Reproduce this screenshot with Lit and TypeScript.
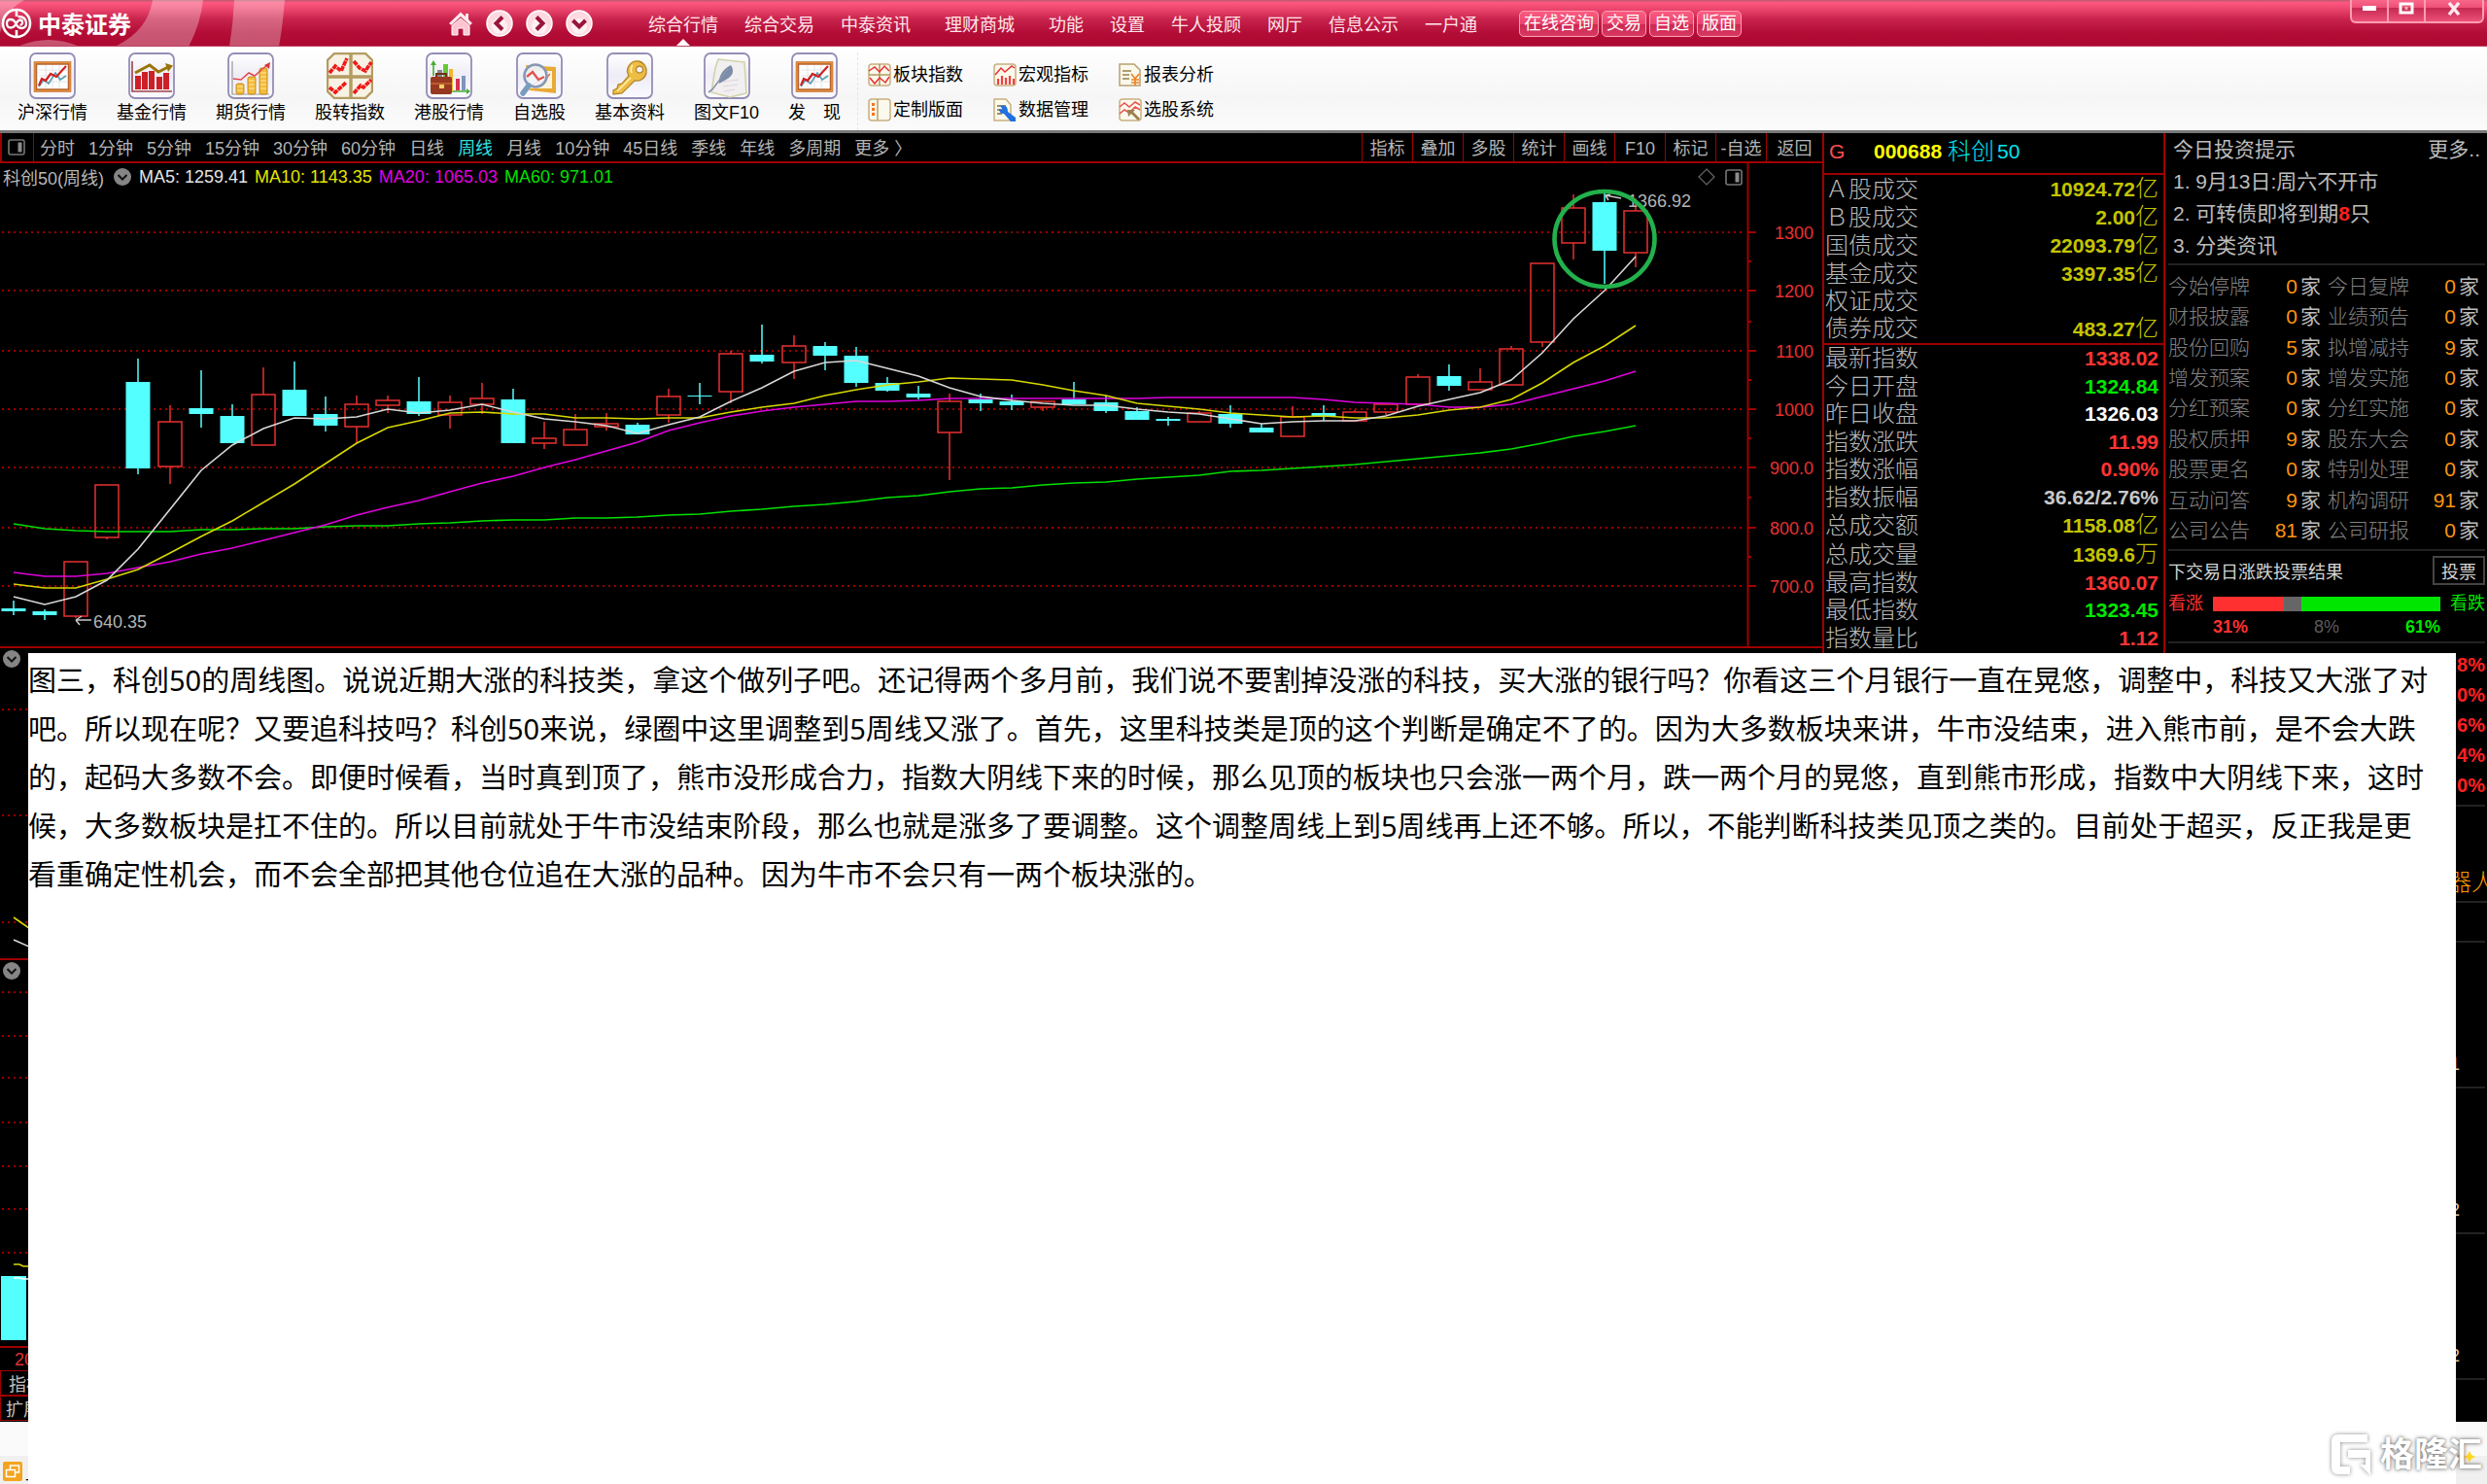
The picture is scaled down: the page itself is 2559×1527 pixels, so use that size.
import { LitElement, html, svg, css } from "lit";
import { customElement } from "lit/decorators.js";
import { classMap } from "lit/directives/class-map.js";

const reset = css`
  * { box-sizing: border-box; }
  button, a { font: inherit; color: inherit; background: none; border: 0; padding: 0; margin: 0; text-decoration: none; cursor: pointer; white-space: nowrap; }
  ul, ol, h1, h2, p { margin: 0; padding: 0; list-style: none; font: inherit; }
  svg { display: block; flex: none; }
`;

/* ---------- shared glyphs ---------- */

const chevronDot = html`<svg width="20" height="20" viewBox="0 0 20 20">
  <circle cx="10" cy="10" r="9" fill="#858585" /><path d="M5.5 8 L10 12.5 L14.5 8" fill="none" stroke="#111" stroke-width="2" /></svg>`;

const panelGlyph = html`<svg width="18" height="17" viewBox="0 0 18 17">
  <rect x="1" y="1" width="16" height="15" rx="2" fill="none" stroke="#777" stroke-width="1.6" /><rect x="10.5" y="3.5" width="4" height="10" fill="#8c8c8c" /></svg>`;

/* ---------- title bar ---------- */

@customElement("title-bar")
class TitleBar extends LitElement {
  static styles = [reset, css`
    :host { display: block; }
    .bar { position: relative; display: flex; align-items: center; height: 48px; overflow: hidden; color: #ffe6ec; font-size: 18px;
      border-bottom: 1px solid #c04565;
      background: linear-gradient(#c25a72 0, #c25a72 1px, #ff5880 2px, #f04a72 8px, #c7224b 20px, #b30d37 34px, #ad0830 47px); }
    .waves { position: absolute; left: 0; top: 0; }
    .brand { position: relative; display: flex; align-items: center; gap: 6px; width: 461px; padding-left: 1px; color: #fff; font-size: 24px; font-weight: 700; }
    .tools { display: flex; align-items: center; gap: 13px; width: 206px; }
    nav { display: flex; align-items: center; gap: 27px; height: 100%; }
    nav a { position: relative; display: flex; align-items: center; height: 100%; }
    nav a.wide { margin: 0 8px; }
    nav a.on::after { content: ""; position: absolute; left: 50%; bottom: 0; margin-left: -7px; border: 7px solid transparent; border-top-width: 0; border-bottom-color: #fff; }
    .quick { display: flex; gap: 3px; margin: 2px 0 0 43px; }
    .quick button { height: 27px; padding: 0 4px; border: 1px solid #ffa0b4; border-radius: 5px; line-height: 25px; color: #fff;
      background: linear-gradient(#fb5c80, #e84570 50%, #cb2850 52%, #d83862); }
    .win { display: flex; align-self: flex-start; height: 24px; margin-left: auto; margin-right: 3px; border: 2px solid #ff9cb2; border-top: 0; border-radius: 0 0 6px 6px;
      background: linear-gradient(#f8688a, #ee4f76 35%, #c62a52 38%, #ec5078); }
    .win button { display: flex; align-items: center; justify-content: center; width: 38px; border-right: 2px solid #ff9cb2; padding-bottom: 5px; }
    .win button:last-child { width: 58px; border: 0; }
  `];
  render() {
    const nav = ["综合行情", "综合交易", "中泰资讯", "理财商城", "功能", "设置", "牛人投顾", "网厅", "信息公示", "一户通"];
    const round = (label: string, d: string) => html`<button aria-label=${label}><svg width="28" height="28" viewBox="0 0 28 28">
      <circle cx="14" cy="14" r="13" fill="#ffd9e2" stroke="#fff" stroke-width="1.5" /><circle cx="14" cy="17" r="8" fill="#fff" opacity=".6" />
      <path d=${d} fill="none" stroke="#98143c" stroke-width="4" /></svg></button>`;
    return html`<header class="bar">
      <svg class="waves" width="300" height="48" viewBox="0 0 300 48">
        <g fill="#fff" opacity=".3">
          <path d="M157 0 H209 Q206 26 194 48 H118 Q152 32 157 0Z" /><path d="M241 0 H293 Q291 26 287 48 H236 Q240 24 241 0Z" />
          <path d="M18 48 Q50 34 82 48Z" /><path d="M0 0 H25 Q6 10 0 34Z" />
        </g></svg>
      <h1 class="brand"><svg width="32" height="32" viewBox="0 0 32 32" fill="none" stroke="#fff">
          <circle cx="16" cy="16" r="14" stroke-width="2.6" />
          <path d="M16 3 V9 M16 23 V29" stroke-width="2.6" />
          <path d="M17.500 9 Q26 9 26 16 Q26 21 21 21 Q17.500 21 15.500 16.500 Q13.500 12 10 12 Q6 12 6 16 Q6 20.500 10 20.500 Q13.500 20.500 15.500 16.500 Q17.500 12.500 20 12.500 Q22.500 13 22 16 Q21.500 18 19.500 17.500" stroke-width="2.300" /></svg>中泰证券</h1>
      <div class="tools">
        <button aria-label="主页"><svg width="26" height="26" viewBox="0 0 26 26"><path d="M1 13 L13 1.500 L18 6 V3 H21 V9 L25 13 L22.500 15 L13 6 L3.500 15Z" fill="#ffe9ee" /><path d="M4 15.500 L13 8 L22 15.500 V25 H16 V18 H10 V25 H4Z" fill="#ffc4d0" stroke="#fff" /></svg></button>
        ${round("后退", "M17 7.500 L10.500 14 L17 20.500")}${round("前进", "M11 7.500 L17.500 14 L11 20.500")}${round("展开", "M7.500 11 L14 17.500 L20.500 11")}
      </div>
      <nav>${nav.map((t, i) => html`<a href="#" class=${classMap({ on: i === 0, wide: i === 3 })}>${t}</a>`)}</nav>
      <div class="quick">${["在线咨询", "交易", "自选", "版面"].map((t) => html`<button>${t}</button>`)}</div>
      <div class="win">
        <button aria-label="最小化"><svg width="16" height="7" viewBox="0 0 16 7"><rect x="1" y="1" width="14" height="5" fill="#fff" /></svg></button>
        <button aria-label="还原"><svg width="16" height="13" viewBox="0 0 16 13"><rect x="2" y="2" width="12" height="9" fill="none" stroke="#fff" stroke-width="3" /><rect x="6.500" y="5" width="3" height="3" fill="#ffd" opacity=".6" /></svg></button>
        <button aria-label="关闭"><svg width="16" height="14" viewBox="0 0 16 14"><path d="M3 1 L13 13 M13 1 L3 13" stroke="#ffe8ee" stroke-width="3.400" /></svg></button>
      </div>
    </header>`;
  }
}

/* ---------- tool strip ---------- */

const frame = svg`<rect x="1" y="1" width="46" height="46" rx="6" fill="url(#tile)" stroke="#958db5" stroke-width="1.8" />`;
const board = svg`<rect x="6.500" y="11" width="35" height="28" fill="#fff" stroke="#b5632c" stroke-width="3.500" /><rect x="6" y="10.500" width="36" height="29" fill="none" stroke="#e8923f" stroke-width="1.500" />
  <path d="M10 18 H39 M10 24 H39 M10 30 H39 M17 13 V37 M24 13 V37 M31 13 V37" stroke="#ddd" stroke-width=".8" />
  <path d="M10 35 L15 28 L20 32 L27 21 L32 28 L38 24" fill="none" stroke="#5aa0b8" stroke-width="1.800" />
  <path d="M10 34 L13 27 L17 29 L22 22 L28 25 L38 14" fill="none" stroke="#d02020" stroke-width="2.200" />`;

const icons: Record<string, unknown> = {
  board: svg`${frame}${board}`,
  bars: svg`${frame}<path d="M4 9 V40 H45" fill="none" stroke="#a04048" stroke-width="1.600" />
    <path d="M7 24h6v14h-6z M14 20h6v18h-6z M21 19h6v19h-6z M29 25h6v13h-6z M36 21h6v17h-6z" fill="#cc2028" />
    <path d="M7 21 L22 13 L31 20 L41 15" fill="none" stroke="#9a7408" stroke-width="3" /><path d="M38 11 L46 13.500 L41 20Z" fill="#9a7408" />`,
  coins: svg`${frame}<path d="M5 9 V43 H43" fill="none" stroke="#999" stroke-width="1.200" /><g fill="#f2bc3c" stroke="#c88a1c"><rect x="9" y="32" width="8" height="11" rx="2" /><rect x="21" y="25" width="8" height="18" rx="2" /><rect x="33" y="16" width="8" height="27" rx="2" /></g>
    <path d="M10 35h6 M10 39h6 M22 29h6 M22 33h6 M22 37h6 M34 21h6 M34 25h6 M34 29h6 M34 33h6 M34 37h6" stroke="#ffe9a0" />
    <path d="M6 27 L14 28 L22 21 L28 24 L36 17 L41 13" fill="none" stroke="#e4474c" stroke-width="1.500" /><path d="M38 13 L44 10 L43 17Z" fill="#d23a3a" />`,
  quad: svg`<path d="M8 1 H40 L47 8 V40 L40 47 H8 L1 40 V8Z" fill="#f8f2e4" stroke="#b39c62" stroke-width="2.400" /><path d="M25 1 V47 M1 25 H47" stroke="#b39c62" stroke-width="3.400" />
    <path d="M3 21 L9 14 L15 19 L21 6 M28 9 L34 16 L40 19 L46 10 M3 36 L9 41 L20 31 M28 42 L35 34 L38 36 L46 28" fill="none" stroke="#f01818" stroke-width="3.600" stroke-dasharray="5 .8" />`,
  brief: svg`${frame}<path d="M8 24 V11 M24 40 H43" stroke="#44b030" stroke-width="1.600" /><path d="M5 13 L8 8 L11 13Z M42 37 L46 40 L42 43Z" fill="#44b030" />
    <rect x="12" y="18" width="5" height="9" fill="#888" /><rect x="18" y="12" width="5" height="14" fill="#68c838" /><rect x="24" y="17" width="4" height="23" fill="#f0b828" /><rect x="31" y="27" width="4" height="12" fill="#d83050" /><rect x="37" y="24" width="4" height="15" fill="#7f94bd" />
    <rect x="5" y="25" width="22" height="18" rx="2" fill="#983820" /><path d="M11 25 V22 H21 V25" fill="none" stroke="#703018" stroke-width="2" /><path d="M5 32 H27" stroke="#bb5c30" stroke-width="2" /><rect x="14" y="33" width="5" height="4" fill="#f0d060" />`,
  lens: svg`${frame}<path d="M10 13 L41 15 V42 L14 39Z" fill="#e9aa35" /><rect x="14" y="19" width="23" height="18" fill="#fbf3df" /><path d="M16 34 L22 30 L27 31 L35 22" fill="none" stroke="#d66" stroke-width="1.400" />
    <circle cx="20" cy="24" r="11.500" fill="#eef5fd" fill-opacity=".9" stroke="#8797b5" stroke-width="2.600" /><path d="M11 25 L17 20 L23 28 L29 25" fill="none" stroke="#e2574c" stroke-width="2.400" /><path d="M13 34 L7 42" stroke="#7a9cbc" stroke-width="5.500" stroke-linecap="round" />`,
  key: svg`${frame}<path fill-rule="evenodd" d="M33 9 A10 10 0 1 1 29 29 L16 42 L7 43 V39 L11 37 L12 33 L16 32 L23 24 A10 10 0 0 1 33 9Z M34 14 A3.600 3.600 0 1 0 34.100 14Z" fill="#eebd44" stroke="#b5872a" stroke-width="1.300" /><path d="M27 13 Q24 17 26 21 M11 40 L25 26" fill="none" stroke="#fff0b4" stroke-width="1.600" />`,
  quill: svg`${frame}<path d="M15 7 L42 10 L44 42 L27 46 L8 41 L12 16Z" fill="#f1efef" stroke="#d3d4a9" stroke-width="1.600" /><path d="M20 30 L36 28 M20 35 L35 33 M21 40 L32 38" stroke="#dcd5e3" />
    <path d="M28 13 Q34 22 23 28 L16 32 Q15 20 28 13Z" fill="#7d8da8" /><path d="M25 17 L9 38 L5 41" fill="none" stroke="#8794a8" stroke-width="1.600" />`,
};

const smallBase = svg`<rect x="1" y="1" width="22" height="22" rx="3" fill="#fbf8ec" stroke="#c8b080" stroke-width="1.500" />`;
const smallIcons: unknown[] = [
  svg`${smallBase}<path d="M12 1V23M1 12H23" stroke="#b39c62" stroke-width="1.600" /><path d="M1 8L7 4L12 9L17 3L22 8M2 15L7 21L12 15L18 20L22 14" fill="none" stroke="#e83030" stroke-width="1.500" />`,
  svg`${smallBase}<path d="M2 12L8 5L12 9L19 3L22 5" fill="none" stroke="#e83030" stroke-width="1.500" /><path d="M5 16v6M9 13v9M13 15v7M17 13v9M21 16v6" stroke="#f04040" stroke-width="2.200" />`,
  svg`<path d="M1 1H16L22 7V23H1Z" fill="#fbf8ec" stroke="#b8a070" stroke-width="1.500" /><path d="M4 8h9M4 12h7M4 16h7" stroke="#b0a070" stroke-width="1.800" /><path d="M13 11l4 5 4-5M17 16v7M13 17h8M13 20h8" fill="none" stroke="#f08020" stroke-width="1.600" />`,
  svg`${smallBase}<path d="M10 1V23" stroke="#b8a070" stroke-width="1.500" /><path d="M4 5h3v3h-3zM4 10h3v3h-3zM4 15h3v3h-3z" fill="#ff7018" />`,
  svg`<path d="M1 1H13L18 7V23H1Z" fill="#fbf8ec" stroke="#c8b080" stroke-width="1.500" /><path d="M4 8h9M4 12h7M4 16h5" stroke="#998f70" stroke-width="1.800" /><path d="M7 8 Q15 6 15 14 L23 20 V24 H18 L11 16 Q6 16 6 11 L10 12Z" fill="#2070e0" />`,
  svg`${smallBase}<path d="M1 9L6 5L11 9L17 4L22 7M1 16L6 12L11 15L17 9L22 12" fill="none" stroke="#e85050" stroke-width="1.500" /><path d="M9 12h8l-2 2 7 7-2 2-7-7-3 3Z" fill="#9a8050" />`,
];

@customElement("tool-strip")
class ToolStrip extends LitElement {
  static styles = [reset, css`
    :host { display: block; }
    .strip { display: flex; height: 89px; padding: 6px 0 0 18px; color: #000; font-size: 18px; line-height: 24px; background: linear-gradient(#fff, #f6f6f6 60%, #fbfbfb); border-bottom: 3px solid #777; }
    .big { display: flex; gap: 30px; padding-right: 17px; }
    .big button { display: flex; flex-direction: column; align-items: center; gap: 2px; }
    .small { display: grid; grid-template-columns: repeat(3, auto); gap: 12px 31px; align-content: center; padding: 2px 0 0 10px; border-left: 1px dashed #dfe4f4; }
    .small button { display: flex; gap: 2px; }
    .defs { position: absolute; }
  `];
  render() {
    const big = [["board", "沪深行情"], ["bars", "基金行情"], ["coins", "期货行情"], ["quad", "股转指数"], ["brief", "港股行情"], ["lens", "自选股"], ["key", "基本资料"], ["quill", "图文F10"], ["board", "发　现"]];
    const small = ["板块指数", "宏观指标", "报表分析", "定制版面", "数据管理", "选股系统"];
    return html`<div class="strip">
      <svg class="defs" width="0" height="0"><linearGradient id="tile" x2="0" y2="1"><stop stop-color="#fff" /><stop offset=".5" stop-color="#eeecf6" /><stop offset="1" stop-color="#fbfaff" /></linearGradient></svg>
      <div class="big">${big.map(([k, t]) => html`<button><svg width="48" height="48" viewBox="0 0 48 48">${icons[k]}</svg><span>${t}</span></button>`)}</div>
      <div class="small">${small.map((t, i) => html`<button><svg width="24" height="24" viewBox="0 0 24 24">${smallIcons[i]}</svg>${t}</button>`)}</div>
    </div>`;
  }
}

/* ---------- candlestick chart ---------- */

type Candle = [up: 0 | 1, top: number, bottom: number, high: number, low: number];
const candles: Candle[] = [
  [0, 626, 629, 618, 633], [0, 629, 633, 627, 638], [1, 578, 634, 578, 636], [1, 499, 553, 499, 555], [0, 393, 482, 369, 488],
  [1, 434, 480, 417, 498], [0, 420, 426, 381, 440], [0, 428, 456, 416, 456], [1, 406, 458, 378, 458], [0, 401, 428, 372, 428],
  [0, 426, 438, 408, 444], [1, 416, 439, 407, 456], [1, 412, 417, 407, 425], [0, 413, 426, 388, 428], [1, 414, 427, 407, 441],
  [1, 410, 416, 394, 426], [0, 411, 456, 400, 456], [1, 451, 456, 434, 462], [1, 442, 458, 426, 458], [1, 436, 439, 425, 443],
  [0, 437, 447, 435, 447], [1, 408, 427, 400, 435], [0, 407, 408, 394, 416], [1, 364, 403, 361, 415], [0, 365, 372, 334, 374],
  [1, 356, 373, 345, 390], [0, 356, 366, 352, 381], [0, 366, 394, 357, 398], [0, 394, 402, 388, 403], [0, 405, 409, 397, 411],
  [1, 413, 445, 405, 494], [0, 411, 415, 405, 423], [0, 413, 417, 406, 422], [1, 413, 419, 413, 423], [0, 411, 416, 393, 416],
  [0, 414, 423, 407, 425], [0, 423, 432, 419, 432], [0, 431, 433, 429, 438], [1, 425, 434, 423, 434], [0, 426, 436, 417, 440],
  [0, 440, 445, 436, 445], [1, 429, 449, 418, 449], [0, 425, 429, 417, 433], [1, 424, 433, 422, 433], [1, 416, 424, 416, 427],
  [1, 388, 416, 385, 416], [0, 387, 397, 375, 402], [1, 393, 401, 379, 401], [1, 359, 396, 356, 396], [1, 271, 352, 271, 357],
  [1, 214, 250, 200, 267], [0, 208, 258, 198, 292], [1, 217, 260, 204, 275],
];
const averages: [string, number[]][] = [
  ["#00e000", [539, 544, 546, 547, 547, 547, 545, 545, 544, 544, 542, 541, 541, 539, 538, 536, 535, 535, 533, 533, 532, 530, 529, 526, 524, 521, 519, 516, 512, 510, 506, 503, 502, 499, 497, 496, 493, 491, 489, 485, 484, 482, 480, 478, 475, 472, 469, 466, 462, 456, 449, 444, 438]],
  ["#e000e0", [589, 593, 593, 590, 584, 578, 570, 564, 556, 548, 540, 530, 522, 515, 506, 497, 490, 481, 473, 464, 455, 443, 435, 428, 423, 419, 416, 413, 413, 412, 410, 410, 410, 410, 410, 410, 410, 409, 409, 409, 409, 409, 411, 414, 415, 416, 419, 419, 416, 408, 400, 392, 382]],
  ["#d8d800", [601, 605, 605, 596, 586, 569, 552, 536, 517, 498, 477, 456, 440, 433, 425, 424, 426, 426, 430, 430, 431, 430, 430, 424, 419, 415, 407, 401, 396, 393, 389, 390, 391, 396, 402, 407, 415, 418, 421, 425, 427, 429, 428, 430, 430, 427, 422, 419, 411, 394, 373, 356, 335]],
  ["#d8d8d8", [614, 622, 614, 597, 565, 524, 484, 458, 441, 430, 431, 429, 421, 425, 422, 416, 424, 431, 434, 438, 446, 437, 429, 413, 399, 382, 373, 371, 379, 387, 399, 408, 412, 415, 417, 417, 421, 424, 426, 431, 436, 434, 433, 433, 428, 418, 411, 404, 391, 363, 328, 299, 264]],
];
const axis: [number, string][] = [[239, "1300"], [299, "1200"], [361, "1100"], [421, "1000"], [481, "900.0"], [543, "800.0"], [603, "700.0"]];
const halfTicks = [269, 331, 391, 451, 512, 573];
const cx = (i: number) => Math.round(14 + i * 32.1);

@customElement("kline-panel")
class KlinePanel extends LitElement {
  static styles = [reset, css`
    :host { display: block; min-width: 0; }
    .menu { display: flex; height: 31px; border-bottom: 2px solid #a00000; color: #b4b4b4; font-size: 18px; line-height: 31px; }
    .menu button { padding-top: 1px; }
    .menu .toggle { display: flex; align-items: center; justify-content: center; width: 35px; padding: 0 2px 0 0; border: solid #a00000; border-width: 0 1px 0 2px; }
    .periods { display: flex; gap: 14px; padding-left: 6px; }
    .periods .on { color: #30e0e0; }
    .actions { display: flex; margin-left: auto; }
    .actions button { width: 52px; border-left: 1px solid #a00000; }
    .actions button:last-child { width: 58px; }
    .legend { position: absolute; left: 3px; display: flex; align-items: center; gap: 7px; height: 28px; font-size: 18px; color: #b8b8b8; white-space: nowrap; }
    .title { padding-right: 2px; }
    .m5 { color: #e4e4e4; } .m10 { color: #e4e400; } .m20 { color: #e000e0; } .m60 { color: #00e000; }
    .canvas { width: 100%; height: auto; }
    .canvas text { font-size: 18px; }
    .sub { position: relative; border-top: 2px solid #a00000; padding: 1px 2px; }
    .sub .plot { position: absolute; left: 0; top: 0; }
    .macd { height: 321px; } .vol { height: 399px; }
    .dates { height: 25px; border-top: 2px solid #a00000; padding-left: 15px; color: #e03030; font-size: 18px; line-height: 25px; }
    .tabs { height: 26px; border: 1px solid #a00000; border-width: 1px 0 1px 1px; padding-left: 8px; color: #c0c0c0; font-size: 18px; line-height: 28px; }
    .tabs.ext { padding-left: 5px; }
  `];
  render() {
    const periods = ["分时", "1分钟", "5分钟", "15分钟", "30分钟", "60分钟", "日线", "周线", "月线", "10分钟", "45日线", "季线", "年线", "多周期", "更多 〉"];
    const actions = ["指标", "叠加", "多股", "统计", "画线", "F10", "标记", "-自选", "返回"];
    return html`
      <div class="menu">
        <button class="toggle" aria-label="侧栏">${panelGlyph}</button>
        <div class="periods">${periods.map((t) => html`<button class=${classMap({ on: t === "周线" })}>${t}</button>`)}</div>
        <div class="actions">${actions.map((t) => html`<button>${t}</button>`)}</div>
      </div>
      <div class="legend"><span class="title">科创50(周线)</span>${chevronDot}<span class="m5">MA5: 1259.41</span><span class="m10">MA10: 1143.35</span><span class="m20">MA20: 1065.03</span><span class="m60">MA60: 971.01</span></div>
      <svg class="canvas" viewBox="0 168 1875 497">
        <g stroke="#980000" stroke-width="2" stroke-dasharray="2 4">${axis.map(([y]) => svg`<path d="M2 ${y} H1796" />`)}</g>
        <g stroke="#a00000" stroke-width="2" fill="none"><path d="M1798.500 168 V665" />${axis.map(([y]) => svg`<path d="M1798 ${y} h9" />`)}${halfTicks.map((y) => svg`<path d="M1798 ${y} h4" />`)}</g>
        <g fill="#e83030" text-anchor="end">${axis.map(([y, t]) => svg`<text x="1866" y=${y + 7}>${t}</text>`)}</g>
        ${candles.map(([up, t, b, h, l], i) => up
          ? svg`<g fill="none" stroke="#e83030" stroke-width="1.500"><rect x=${cx(i) - 12} y=${t} width="24" height=${b - t} /><path d="M${cx(i)} ${h} V${t} M${cx(i)} ${b} V${l}" /></g>`
          : svg`<g fill="#54ffff"><rect x=${cx(i) - 12.5} y=${t} width="25" height=${b - t} /><rect x=${cx(i) - 0.75} y=${h} width="1.500" height=${l - h} /></g>`)}
        ${averages.map(([c, ys]) => svg`<polyline fill="none" stroke=${c} stroke-width="1.600" points=${ys.map((y, i) => `${cx(i)},${y}`).join(" ")} />`)}
        <g fill="#b4b4b4"><text x="1675" y="213">1366.92</text><text x="96" y="646">640.35</text></g>
        <path d="M1652 201 L1668 204 M1652 201 L1657 200 M1652 201 L1655 206 M78 638 H94 M78 638 L84 634 M78 638 L82 643" stroke="#c8c8c8" stroke-width="1.500" fill="none" />
        <ellipse cx="1651" cy="246" rx="51.500" ry="49" fill="none" stroke="#22b14c" stroke-width="4.600" />
        <path d="M1756 174 L1764 182 L1756 190 L1748 182Z" fill="none" stroke="#666" stroke-width="1.200" />
        <rect x="1776" y="175" width="16" height="15" rx="2" fill="none" stroke="#777" stroke-width="1.600" /><rect x="1785.500" y="177.500" width="4" height="10" fill="#8c8c8c" />
      </svg>
      <div class="sub macd">
        <svg class="plot" width="30" height="318" viewBox="0 667 30 318">
          <path d="M2 730 H30 M2 839 H30 M2 949 H30" stroke="#980000" stroke-width="2" stroke-dasharray="2 4" />
          <path d="M14 944 L30 955" stroke="#d8d800" stroke-width="1.600" /><path d="M14 967 L30 974" stroke="#d8d8d8" stroke-width="1.600" />
        </svg>
        ${chevronDot}
      </div>
      <div class="sub vol">
        <svg class="plot" width="30" height="396" viewBox="0 988 30 396">
          <path d="M2 1021 H30 M2 1066 H30 M2 1109 H30 M2 1155 H30 M2 1200 H30 M2 1244 H30 M2 1289 H30" stroke="#980000" stroke-width="2" stroke-dasharray="2 4" />
          <rect x="1" y="1313" width="26" height="66" fill="#54ffff" /><path d="M14 1301 L20 1301 L24 1303 H30" fill="none" stroke="#d8d800" stroke-width="1.600" /><path d="M14 1315 H20 L24 1316 H30" fill="none" stroke="#fff" stroke-width="1.600" />
        </svg>
        ${chevronDot}
      </div>
      <div class="dates">20</div>
      <div class="tabs">指标</div>
      <div class="tabs ext">扩展</div>`;
  }
}

/* ---------- quote table ---------- */

@customElement("quote-panel")
class QuotePanel extends LitElement {
  static styles = [reset, css`
    :host { display: block; border: solid #a00000; border-width: 0 2px; }
    .head { display: flex; align-items: center; height: 43px; border-bottom: 2px solid #a00000; padding: 0 0 3px 5px; font-size: 21px; }
    .g { width: 46px; color: #ff5050; }
    .code { width: 76px; color: #ffff00; font-weight: 700; }
    .name { display: flex; align-items: center; gap: 3px; color: #00e4f4; font-size: 24px; line-height: 30px; font-weight: 300; }
    .name b { font-size: 21px; }
    table { width: 100%; border-collapse: collapse; }
    .turn { height: 175px; border-bottom: 2px solid #a00000; }
    .index { height: 316px; }
    th, td { padding: 0; line-height: 24px; white-space: nowrap; }
    th { text-align: left; padding-left: 1px; color: #b8b8b8; font-size: 24px; font-weight: 300; }
    td { text-align: right; padding-right: 5px; font-size: 21px; font-weight: 700; }
    .unit { font-size: 24px; font-weight: 300; }
    .y { color: #c4c400; } .r { color: #ff3434; } .gr { color: #00e600; } .w { color: #fff; } .s { color: #c8c8c8; }
  `];
  render() {
    const turn = [["Ａ股成交", "10924.72", "亿", "y"], ["Ｂ股成交", "2.00", "亿", "y"], ["国债成交", "22093.79", "亿", "y"], ["基金成交", "3397.35", "亿", "y"], ["权证成交", "", "", "y"], ["债券成交", "483.27", "亿", "y"]];
    const index = [["最新指数", "1338.02", "", "r"], ["今日开盘", "1324.84", "", "gr"], ["昨日收盘", "1326.03", "", "w"], ["指数涨跌", "11.99", "", "r"], ["指数涨幅", "0.90%", "", "r"], ["指数振幅", "36.62/2.76%", "", "s"], ["总成交额", "1158.08", "亿", "y"], ["总成交量", "1369.6", "万", "y"], ["最高指数", "1360.07", "", "r"], ["最低指数", "1323.45", "", "gr"], ["指数量比", "1.12", "", "r"]];
    const rows = (list: string[][]) => list.map(([k, v, u, c]) => html`<tr><th scope="row">${k}</th><td class=${c}>${v}${u ? html`<span class="unit">${u}</span>` : ""}</td></tr>`);
    return html`<h2 class="head"><span class="g">G</span><span class="code">000688</span><span class="name">科创<b>50</b></span></h2>
      <table class="turn"><tbody>${rows(turn)}</tbody></table>
      <table class="index"><tbody>${rows(index)}</tbody></table>`;
  }
}

/* ---------- news, events and vote ---------- */

@customElement("info-panel")
class InfoPanel extends LitElement {
  static styles = [reset, css`
    :host { display: block; min-width: 0; overflow: hidden; color: #bcbcbc; font-size: 21px; }
    section { border-bottom: 2px solid #222; margin: 0 2px 0 3px; }
    .news { height: 136px; padding: 0 5px 0 5px; line-height: 33px; }
    .title { display: flex; justify-content: space-between; }
    .hot { color: #ff2020; }
    .events { height: 294px; padding: 6px 6px 3px 0; }
    table { width: 100%; height: 100%; border-collapse: collapse; table-layout: fixed; line-height: 24px; }
    th { width: 84px; padding: 0; text-align: left; font-weight: 300; color: #808080; white-space: nowrap; }
    td { padding: 0; text-align: right; white-space: nowrap; }
    td:nth-child(2) { width: 80px; padding-right: 7px; }
    .n { color: #ff9410; margin-right: 3px; }
    .vote { height: 95px; padding-top: 5px; font-size: 18px; }
    .ask { display: flex; align-items: center; justify-content: space-between; color: #d4d4d4; }
    .ask button { width: 54px; height: 30px; border: 2px solid #444; }
    .poll { display: grid; grid-template-columns: auto 1fr auto; gap: 0 10px; align-items: center; line-height: 24px; margin-top: 7px; }
    .bar { display: flex; height: 15px; }
    .pct { grid-column: 2; display: flex; justify-content: space-between; font-weight: 700; }
    .up { color: #ff3030; } .down { color: #00e600; } .flat { color: #5c5c5c; font-weight: 400; }
    .bu { background: #ff3030; } .bf { background: #666; } .bd { background: #00e600; }
    .gains { height: 168px; padding-top: 7px; text-align: right; color: #ff2020; font-size: 20px; font-weight: 700; line-height: 31px; }
    .topic { display: flex; justify-content: flex-end; align-items: flex-end; height: 99px; margin-right: -8px; padding-bottom: 3px; color: #ff9900; font-size: 24px; line-height: 32px; font-weight: 300; }
    .gap { height: 41px; }
    .item { display: flex; justify-content: flex-end; align-items: flex-end; height: 150px; padding: 0 26px 12px 0; color: #e0c8a0; font-size: 18px; line-height: 21px; }
  `];
  render() {
    const ev: [string, number][] = [["今始停牌", 0], ["今日复牌", 0], ["财报披露", 0], ["业绩预告", 0], ["股份回购", 5], ["拟增减持", 9], ["增发预案", 0], ["增发实施", 0], ["分红预案", 0], ["分红实施", 0], ["股权质押", 9], ["股东大会", 0], ["股票更名", 0], ["特别处理", 0], ["互动问答", 9], ["机构调研", 91], ["公司公告", 81], ["公司研报", 0]];
    const cell = ([k, n]: [string, number]) => html`<th scope="row">${k}</th><td><span class="n">${n}</span>家</td>`;
    const poll: [string, number][] = [["bu", 31], ["bf", 8], ["bd", 61]];
    return html`
      <section class="news">
        <div class="title"><h2>今日投资提示</h2><a href="#">更多..</a></div>
        <ol><li>1. 9月13日:周六不开市</li><li>2. 可转债即将到期<b class="hot">8</b>只</li><li>3. 分类资讯</li></ol>
      </section>
      <section class="events"><table><tbody>${Array.from({ length: 9 }, (_, r) => html`<tr>${cell(ev[2 * r])}${cell(ev[2 * r + 1])}</tr>`)}</tbody></table></section>
      <section class="vote">
        <div class="ask"><span>下交易日涨跌投票结果</span><button>投票</button></div>
        <div class="poll"><span class="up">看涨</span><div class="bar">${poll.map(([c, n]) => html`<span class=${c} style="width:${n}%"></span>`)}</div><span class="down">看跌</span>
          <div class="pct"><span class="up">31%</span><span class="flat">8%</span><span class="down">61%</span></div></div>
      </section>
      <section class="gains">${["8%", "0%", "6%", "4%", "0%"].map((t) => html`<p>${t}</p>`)}</section>
      <section class="topic">器人</section>
      <section class="gap"></section>
      <section class="item">1</section><section class="item">2</section><section class="item">2</section>`;
  }
}

/* ---------- page ---------- */

const noteLines = [
  "图三，科创50的周线图。说说近期大涨的科技类，拿这个做列子吧。还记得两个多月前，我们说不要割掉没涨的科技，买大涨的银行吗？你看这三个月银行一直在晃悠，调整中，科技又大涨了对",
  "吧。所以现在呢？又要追科技吗？科创50来说，绿圈中这里调整到5周线又涨了。首先，这里科技类是顶的这个判断是确定不了的。因为大多数板块来讲，牛市没结束，进入熊市前，是不会大跌",
  "的，起码大多数不会。即便时候看，当时真到顶了，熊市没形成合力，指数大阴线下来的时候，那么见顶的板块也只会涨一两个月，跌一两个月的晃悠，直到熊市形成，指数中大阴线下来，这时",
  "候，大多数板块是扛不住的。所以目前就处于牛市没结束阶段，那么也就是涨多了要调整。这个调整周线上到5周线再上还不够。所以，不能判断科技类见顶之类的。目前处于超买，反正我是更",
  "看重确定性机会，而不会全部把其他仓位追在大涨的品种。因为牛市不会只有一两个板块涨的。",
];

@customElement("app-root")
class AppRoot extends LitElement {
  static styles = [reset, css`
    :host { display: block; font-family: "Liberation Sans", "Noto Sans CJK SC", sans-serif; }
    .app { position: relative; display: flex; flex-direction: column; min-height: 100vh; overflow: hidden; background: #000; }
    .main { flex: 1; display: grid; grid-template-columns: minmax(0, 1fr) 353px 331px; }
    .status { display: flex; justify-content: space-between; align-items: flex-end; height: 64px; padding: 0 12px 3px 3px; background: linear-gradient(#fafafa 35px, #f0f0f0 35px); color: #000; font-size: 18px; }
    .task { display: flex; align-items: flex-end; gap: 4px; }
    .spark { margin-bottom: 18px; }
    .note { position: absolute; left: 29px; right: 32px; top: 672px; bottom: 0; padding: 3px 0 0; background: #fff; color: #000; font: 29px/50px "Noto Sans", "Noto Sans CJK SC", sans-serif; white-space: nowrap; overflow: hidden; }
    .mark { position: absolute; right: 5px; bottom: 5px; display: flex; align-items: center; gap: 9px; color: #fff; font-size: 35px; font-weight: 700; line-height: 50px; text-shadow: 0 0 3px #777, 0 0 5px #999; }
    .mark svg { filter: drop-shadow(0 0 2px #888); }
  `];
  render() {
    return html`<div class="app">
      <title-bar></title-bar>
      <tool-strip></tool-strip>
      <main class="main"><kline-panel></kline-panel><quote-panel></quote-panel><info-panel></info-panel></main>
      <footer class="status">
        <span class="task"><svg width="20" height="20" viewBox="0 0 20 20"><rect width="20" height="20" rx="2" fill="#f4a41c" /><rect x="7.500" y="4" width="9" height="7" fill="none" stroke="#fff" stroke-width="1.500" /><rect x="3.500" y="8.500" width="9" height="7" fill="#f4a41c" stroke="#fff" stroke-width="1.500" /></svg>_</span>
        <svg class="spark" width="20" height="14" viewBox="0 0 20 14"><circle cx="5" cy="8" r="4" fill="#e06020" /><path d="M14 1 L16 5 L20 7 L16 9 L14 13 L12 9 L9 7 L12 5Z" fill="#ffd820" /></svg>
      </footer>
      <article class="note">${noteLines.map((t) => html`<p>${t}</p>`)}</article>
      <div class="mark"><svg width="42" height="44" viewBox="0 0 42 44"><path d="M8 1 H38 V9 H10 V34 H20 V42 H8 Q1 42 1 35 V8 Q1 1 8 1Z M18 17 H41 V43 L30 32 H36 V25 H18Z" fill="#fff" /></svg><span>格隆汇</span></div>
    </div>`;
  }
}
